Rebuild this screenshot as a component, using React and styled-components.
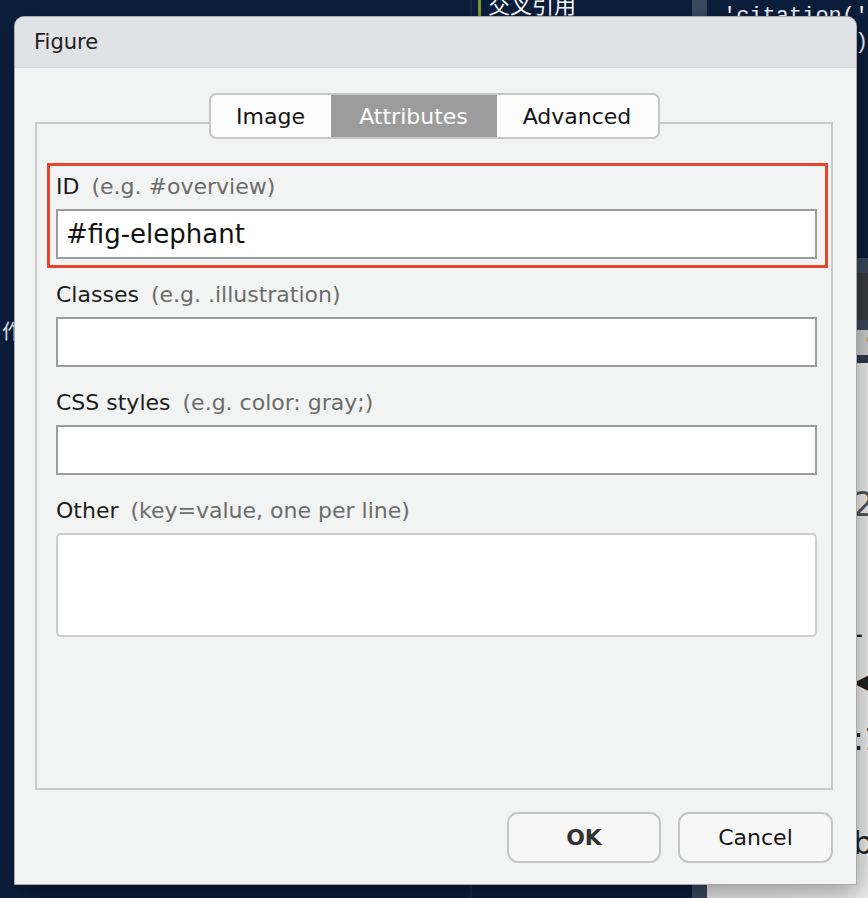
import React from 'react';
import styled, { createGlobalStyle, css } from 'styled-components';

const GlobalStyle = createGlobalStyle`
  html, body {
    margin: 0;
    padding: 0;
    overflow: hidden;
  }
  body {
    font-family: "DejaVu Sans", "Noto Sans", sans-serif;
    background: #0b1e3c;
  }
  * { box-sizing: border-box; }
`;

// ---------- backdrop (the IDE behind the modal) ----------

const Desktop = styled.div`
  position: relative;
  height: 100vh;
  display: grid;
  grid-template-columns: 470px 2px 220px 15px 1fr;
  background: #0b1e3c;
  overflow: hidden;
`;

const EditorPane = styled.div`
  background: #0b1e3c;
  color: #e8ecf2;
  padding: 316px 0 0 2px;
  font-family: "Noto Sans CJK SC", sans-serif;
  font-size: 20px;
`;

const Divider = styled.div`
  background: ${p => p.$color};
`;

const OutlinePane = styled.div`
  background: #0b1e3c;
  padding: 0 0 0 6px;
`;

const OutlineItem = styled.div`
  display: flex;
  align-items: flex-start;
  gap: 7px;
  margin-top: -12px;
  color: #ffffff;
  font-family: "Noto Sans CJK SC", sans-serif;
  font-size: 22px;
  line-height: 30px;
  &::before {
    content: '';
    width: 3px;
    height: 30px;
    background: #86962c;
  }
`;

const SidePane = styled.div`
  display: flex;
  flex-direction: column;
  min-width: 0;
`;

const CodeArea = styled.div`
  height: 258px;
  background: #0b1e3c;
  padding: 4px 0 0 16px;
  font-family: "Liberation Mono", monospace;
  font-size: 22px;
  line-height: 26px;
  color: #f1f3f6;
  white-space: pre;
`;

const Band = styled.div`
  height: ${p => p.$h}px;
  background: ${p => p.$bg};
  color: ${p => p.$fg || '#fff'};
  font-size: 16px;
  line-height: ${p => p.$h}px;
  padding-left: 148px;
  white-space: pre;
`;

const Viewer = styled.div`
  flex: 1;
  background: linear-gradient(90deg, #e9e9e9, #f3f3f3);
  padding: 124px 0 0 146px;
  color: #222;
  font-size: 30px;
  line-height: 1;
  display: flex;
  flex-direction: column;
`;

const ViewerLine = styled.div`
  margin-top: ${p => p.$top || 0}px;
  color: ${p => p.$color || '#222'};
  font-size: ${p => p.$size || 30}px;
`;

// ---------- modal ----------

const Dialog = styled.div`
  position: absolute;
  left: 14px;
  top: 16px;
  width: 843px;
  height: 869px;
  display: flex;
  flex-direction: column;
  background: #f2f3f3;
  border: 1px solid #a9a9a9;
  border-radius: 10px 10px 0 0;
  box-shadow: 4px 10px 28px rgba(0, 0, 0, 0.35);
  overflow: hidden;
`;

const TitleBar = styled.div`
  height: 51px;
  flex-shrink: 0;
  display: flex;
  align-items: center;
  padding-left: 19px;
  background: #e1e2e5;
  border-bottom: 1px solid #d3d4d7;
  color: #1d1d1d;
  font-size: 21px;
`;

const Body = styled.div`
  flex: 1;
  display: flex;
  flex-direction: column;
  padding: 25px 23px 21px 20px;
`;

const TabBar = styled.div`
  position: relative;
  z-index: 1;
  align-self: center;
  display: flex;
  height: 46px;
  margin-bottom: -17px;
  border: 2px solid #c6c6c6;
  border-radius: 7px;
  background: #fcfcfc;
  overflow: hidden;
`;

const Tab = styled.div`
  width: ${p => p.$w}px;
  display: flex;
  align-items: center;
  justify-content: center;
  font-size: 22px;
  color: #141414;
  ${p => p.$active && css`
    background: #9c9c9c;
    color: #ffffff;
  `}
`;

const Frame = styled.div`
  height: 668px;
  display: flex;
  flex-direction: column;
  padding: 39px 14px 0 19px;
  border: 2px solid #c9c9c9;
`;

const Field = styled.div`
  display: flex;
  flex-direction: column;
  gap: 10px;
  margin-top: ${p => p.$top || 0}px;
  ${p => p.$highlight && css`
    margin: 0 -11px 0 -9px;
    padding: 9px 8px 6px 6px;
    border: 3px solid #e8442e;
  `}
`;

const Label = styled.div`
  display: flex;
  align-items: baseline;
  gap: 12px;
  height: 24px;
  line-height: 24px;
  font-size: 22px;
  color: #1c1c1c;
`;

const Hint = styled.span`
  color: #6c6c6c;
`;

const TextInput = styled.div`
  height: 50px;
  display: flex;
  align-items: center;
  padding-left: 8px;
  background: #ffffff;
  border: 2px solid #9d9d9d;
  font-size: 26px;
  color: #111;
`;

const TextArea = styled.div`
  height: 104px;
  background: #ffffff;
  border: 2px solid #cdcdcd;
  border-radius: 5px;
`;

const Footer = styled.div`
  display: flex;
  justify-content: flex-end;
  gap: 17px;
  margin-top: 22px;
`;

const Button = styled.div`
  width: ${p => p.$w}px;
  height: 51px;
  display: flex;
  align-items: center;
  justify-content: center;
  background: #f7f7f7;
  border: 2px solid #c4c4c4;
  border-radius: 11px;
  font-size: 22px;
  color: #151515;
  ${p => p.$primary && css`
    font-weight: bold;
    color: #333;
  `}
`;

const fields = [
  { label: 'Classes', hint: '(e.g. .illustration)' },
  { label: 'CSS styles', hint: '(e.g. color: gray;)' },
];

export default function App() {
  return (
    <>
      <GlobalStyle />
      <Desktop>
        <EditorPane>作</EditorPane>
        <Divider $color="#26365180" />
        <OutlinePane>
          <OutlineItem>交叉引用</OutlineItem>
        </OutlinePane>
        <Divider $color="#3a4961" />
        <SidePane>
          <CodeArea>{"'citation('bookdown'\n   'knitr') 'bo\n            --\n            '"}</CodeArea>
          <Band $h={15} $bg="#3d4a5f" />
          <Band $h={47} $bg="#3a3c40">{'   :'}</Band>
          <Band $h={10} $bg="#3d4a5f" />
          <Band $h={25} $bg="#d3d3d3" $fg="#b0893a">{'  ✎'}</Band>
          <Band $h={8} $bg="#2d3a50" />
          <Viewer>
            <ViewerLine $color="#555" $size={34}>2</ViewerLine>
            <ViewerLine $top={100} $size={28}>-</ViewerLine>
            <ViewerLine $top={22} $size={22}>◀</ViewerLine>
            <ViewerLine $top={30} $size={32}>:1</ViewerLine>
            <ViewerLine $top={72} $size={32}>b</ViewerLine>
          </Viewer>
        </SidePane>

        <Dialog>
          <TitleBar>Figure</TitleBar>
          <Body>
            <TabBar>
              <Tab $w={120}>Image</Tab>
              <Tab $w={166} $active>Attributes</Tab>
              <Tab $w={161}>Advanced</Tab>
            </TabBar>
            <Frame>
              <Field $highlight>
                <Label>ID <Hint>(e.g. #overview)</Hint></Label>
                <TextInput>#fig-elephant</TextInput>
              </Field>
              {fields.map((f, i) => (
                <Field key={f.label} $top={i === 0 ? 15 : 24}>
                  <Label>{f.label} <Hint>{f.hint}</Hint></Label>
                  <TextInput />
                </Field>
              ))}
              <Field $top={24}>
                <Label>Other <Hint>(key=value, one per line)</Hint></Label>
                <TextArea />
              </Field>
            </Frame>
            <Footer>
              <Button $w={154} $primary>OK</Button>
              <Button $w={155}>Cancel</Button>
            </Footer>
          </Body>
        </Dialog>
      </Desktop>
    </>
  );
}
